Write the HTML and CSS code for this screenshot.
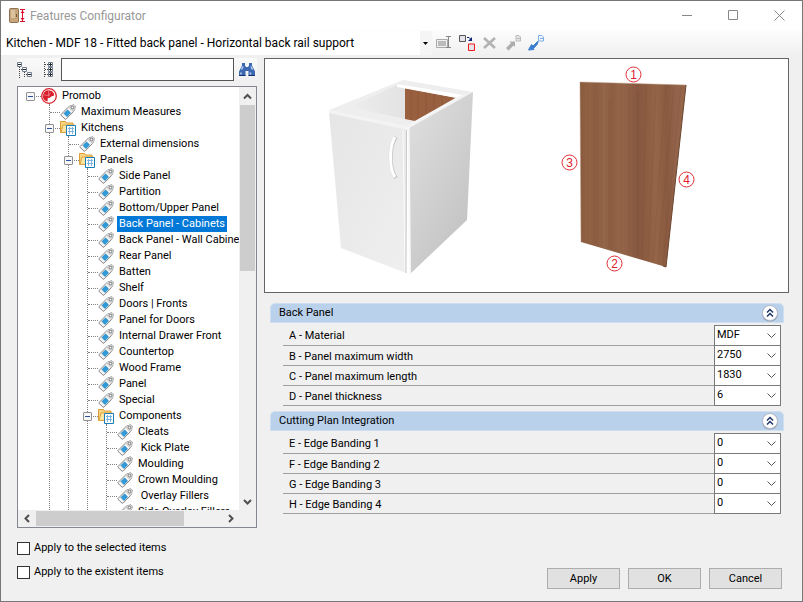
FILE: index.html
```
<!DOCTYPE html>
<html lang="en">
<head>
    <meta charset="UTF-8">
    <meta name="viewport" content="width=device-width, initial-scale=1.0">
    <title>Features Configurator</title>
    <link rel="stylesheet" href="styles.css">
</head>
<body>
    <!-- Shared icons -->
    <svg class="defs" width="0" height="0" aria-hidden="true">
        <symbol id="tag" viewBox="0 0 16 16">
            <path d="M1 10.500 9.500 2l4.500-1.200 1.200 1.200-.7 4.500L6 15.200H5.200L1 11.300z" fill="#f4f4f4" stroke="#858585"/>
            <path d="M9.500 2 14 .8l1.200 1.200-.7 4.500-1.500 1.500-5-4.500z" fill="#d2d2d2"/>
            <circle cx="12.500" cy="3.500" r="1.300" fill="#fff" stroke="#777"/>
            <path d="m4 9.500 3.500-3.500 3 2.800L7 12.500z" fill="#2d9bdc" stroke="#1577b8" stroke-width=".7"/>
        </symbol>
        <symbol id="folder" viewBox="0 0 16 16">
            <path d="M.5 12.500V1.500h5l1 1.500h6.500v9.500z" fill="#f6d583" stroke="#dd9d35"/>
            <path d="M1 12.500 3 5h11.500v7z" fill="#fde6a2" stroke="#dfa443"/>
            <path d="M6.500 5.500h9v10h-9z" fill="#fff" stroke="#1a7fb8"/>
            <path d="M8 8.500h6M8 11.500h6M9.500 7v7M12.500 7v7" stroke="#7db4e0"/>
        </symbol>
        <symbol id="promob" viewBox="0 0 16 16">
            <circle cx="8" cy="8" r="7.300" fill="#fff" stroke="#d9232e" stroke-width="1.300"/>
            <path d="M7.500 2.300a5.700 5.700 0 0 0-2.500 10.700l1.500.4.300-3.500 2-.2 1.500-1.200 2.800-1-.3-2.200-2-2.400z" fill="#d81e2c"/>
            <path d="M7.500 2.500v5M3 7l5 .5M9.500 4.500l-2 4" stroke="#f08a90" stroke-width=".7"/>
        </symbol>
        <symbol id="collapse" viewBox="0 0 18 18">
            <circle cx="9" cy="9.500" r="8" fill="#8b93a6"/>
            <circle cx="9" cy="9" r="7.500" fill="#fff" stroke="#b6bcc8"/>
            <path d="m6 8.500 3-3 3 3M6 12.500l3-3 3 3" fill="none" stroke="#1e3566" stroke-width="1.500"/>
        </symbol>
    </svg>

    <div class="window">
        <header class="titlebar">
            <svg class="app-icon" width="17" height="16" viewBox="0 0 17 16" aria-hidden="true">
                <rect x=".5" y=".5" width="9" height="14" rx="1" fill="#c6a57a" stroke="#8d7150"/>
                <path d="M2 2h4v8H2z" fill="#dcc29c"/>
                <path d="M7.500 6v3" stroke="#6d5436"/>
                <path d="M11 1.500h5M11 13.500h5M13.500 2v11" stroke="#d9102a"/>
                <path d="m11.500 5 2-2.500 2 2.500zM11.500 10l2 2.500 2-2.500z" fill="#d9102a"/>
            </svg>
            <h1>Features Configurator</h1>
            <div class="window-buttons">
                <button type="button" aria-label="Minimize"><svg width="11" height="11"><path d="M0 5.500h10"/></svg></button>
                <button type="button" aria-label="Maximize"><svg width="11" height="11"><path d="M.5.500h9v9h-9z"/></svg></button>
                <button type="button" aria-label="Close"><svg width="11" height="11"><path d="m.5.500 10 10m0-10-10 10"/></svg></button>
            </div>
        </header>

        <!-- Configuration picker and its actions -->
        <div class="toolbar">
            <select class="config" aria-label="Configuration">
                <option>Kitchen - MDF 18 - Fitted back panel - Horizontal back rail support</option>
            </select>
            <button type="button" aria-label="Rename">
                <svg width="16" height="16" viewBox="0 0 16 16"><path d="M.5 4.500h11v8H.5z" fill="#eee" stroke="#aaa"/><path d="M2 6h8v5H2z" fill="#bcbcbc"/><path d="M10 1.500h5M10 12.500h5M12.500 2v10" stroke="#888"/></svg>
            </button>
            <button type="button" aria-label="Duplicate">
                <svg width="16" height="16" viewBox="0 0 16 16"><path d="M.5.500h6v6h-6z" fill="#e4e4ea" stroke="#555"/><path d="M9.500 9h6v6.500h-6z" fill="#e4e4ea" stroke="#f01818"/><path d="M8 2.500h2l2 2" fill="none" stroke="#0a2472"/><path d="M13 2v4H9z" fill="#0a2472"/></svg>
            </button>
            <button type="button" aria-label="Delete">
                <svg width="16" height="16" viewBox="0 0 16 16"><path d="m2 3 11 10M13 3 2 13" stroke="#b2b2b2" stroke-width="2.500"/></svg>
            </button>
            <button type="button" aria-label="Export">
                <svg width="16" height="16" viewBox="0 0 16 16"><path d="m1 13 5-5-1.500-1.500H10V12L8.500 10.500l-5 5z" fill="#adadad"/><path d="M11 .5h3l1.500 1.500v4H11z" fill="#e4e4e4" stroke="#bbb"/><path d="M12 3.500h3" stroke="#bbb"/></svg>
            </button>
            <button type="button" aria-label="Import">
                <svg width="16" height="16" viewBox="0 0 16 16"><path d="m10 6-5 5L3.500 9.500.5 15 6 14.500l-.5-1L9.500 9z" fill="#3b7fd0" stroke="#3b7fd0"/><path d="M10.500.500h3L15.500 2v4h-5z" fill="#eef5ff" stroke="#7eaee6"/><path d="M12 3.500h3" stroke="#7eaee6"/></svg>
            </button>
        </div>

        <main class="content">
            <section class="left">
                <div class="search">
                    <button type="button" aria-label="Expand levels">
                        <svg width="16" height="16" viewBox="0 0 16 16"><path d="M2.500 5v11M4 7.500h3M7.500 10v6M9 12.500h3" stroke="#444" stroke-dasharray="1 1"/><path d="M.5.500h4v4h-4zM5.500 5.500h4v4h-4zM10.500 10.500h4v4h-4z" fill="#fff" stroke="#6f7f90"/><path d="M1 2.500h3M6 7.500h3M11 12.500h3" stroke="#222"/></svg>
                    </button>
                    <button type="button" aria-label="Collapse levels">
                        <svg width="16" height="16" viewBox="0 0 16 16"><path d="M4.500 0v16M5 2.500h3M5 7.500h3M5 12.500h3" stroke="#444" stroke-dasharray="1 1"/><path d="M8.500.500h4v4h-4zM8.500 5.500h4v4h-4zM8.500 10.500h4v4h-4z" fill="#fff" stroke="#6f7f90"/><path d="M9 2.500h3M10.500 1v3M9 7.500h3M10.500 6v3M9 12.500h3M10.500 11v3" stroke="#222"/></svg>
                    </button>
                    <input type="text" aria-label="Search features">
                    <button type="button" aria-label="Find">
                        <svg width="16" height="16" viewBox="0 0 16 16"><path d="M3 1h3v2.500L7 5h2l1-1.500V1h3v2.500l3 6V14H9.500V9h-3v5H0V9.500l3-6z" fill="#3d69b0"/><path d="M2.500 7.500 4 4.500M12 4.500l1.500 3M2 10.500v2M11.500 10.500v2" stroke="#bdd3f3" stroke-width="1.500"/><path d="M0 13.500h6.500M9.500 13.500H16" stroke="#17346d"/></svg>
                    </button>
                </div>

                <div class="tree-box">
                    <div class="tree-view">
                        <ul class="tree" role="tree" aria-label="Features">
                            <li><div class="row"><button type="button" class="toggle" aria-label="Collapse Promob"></button><svg><use href="#promob"/></svg><span>Promob</span></div>
                                <ul>
                                    <li><div class="row"><svg><use href="#tag"/></svg><span>Maximum Measures</span></div></li>
                                    <li><div class="row"><button type="button" class="toggle" aria-label="Collapse Kitchens"></button><svg><use href="#folder"/></svg><span>Kitchens</span></div>
                                        <ul>
                                            <li><div class="row"><svg><use href="#tag"/></svg><span>External dimensions</span></div></li>
                                            <li><div class="row"><button type="button" class="toggle" aria-label="Collapse Panels"></button><svg><use href="#folder"/></svg><span>Panels</span></div>
                                                <ul>
                                                    <li><div class="row"><svg><use href="#tag"/></svg><span>Side Panel</span></div></li>
                                                    <li><div class="row"><svg><use href="#tag"/></svg><span>Partition</span></div></li>
                                                    <li><div class="row"><svg><use href="#tag"/></svg><span>Bottom/Upper Panel</span></div></li>
                                                    <li><div class="row selected"><svg><use href="#tag"/></svg><span>Back Panel - Cabinets</span></div></li>
                                                    <li><div class="row"><svg><use href="#tag"/></svg><span>Back Panel - Wall Cabinets</span></div></li>
                                                    <li><div class="row"><svg><use href="#tag"/></svg><span>Rear Panel</span></div></li>
                                                    <li><div class="row"><svg><use href="#tag"/></svg><span>Batten</span></div></li>
                                                    <li><div class="row"><svg><use href="#tag"/></svg><span>Shelf</span></div></li>
                                                    <li><div class="row"><svg><use href="#tag"/></svg><span>Doors | Fronts</span></div></li>
                                                    <li><div class="row"><svg><use href="#tag"/></svg><span>Panel for Doors</span></div></li>
                                                    <li><div class="row"><svg><use href="#tag"/></svg><span>Internal Drawer Front</span></div></li>
                                                    <li><div class="row"><svg><use href="#tag"/></svg><span>Countertop</span></div></li>
                                                    <li><div class="row"><svg><use href="#tag"/></svg><span>Wood Frame</span></div></li>
                                                    <li><div class="row"><svg><use href="#tag"/></svg><span>Panel</span></div></li>
                                                    <li><div class="row"><svg><use href="#tag"/></svg><span>Special</span></div></li>
                                                    <li><div class="row"><button type="button" class="toggle" aria-label="Collapse Components"></button><svg><use href="#folder"/></svg><span>Components</span></div>
                                                        <ul>
                                                            <li><div class="row"><svg><use href="#tag"/></svg><span>Cleats</span></div></li>
                                                            <li><div class="row"><svg><use href="#tag"/></svg><span>&nbsp;Kick Plate</span></div></li>
                                                            <li><div class="row"><svg><use href="#tag"/></svg><span>Moulding</span></div></li>
                                                            <li><div class="row"><svg><use href="#tag"/></svg><span>Crown Moulding</span></div></li>
                                                            <li><div class="row"><svg><use href="#tag"/></svg><span>&nbsp;Overlay Fillers</span></div></li>
                                                            <li><div class="row"><svg><use href="#tag"/></svg><span>Side Overlay Fillers</span></div></li>
                                                        </ul>
                                                    </li>
                                                </ul>
                                            </li>
                                        </ul>
                                    </li>
                                </ul>
                            </li>
                        </ul>
                    </div>
                    <div class="scroll vertical">
                        <button type="button" aria-label="Scroll up"><svg width="9" height="9"><path d="m1 6.500 3.500-3.500L8 6.500"/></svg></button>
                        <div class="track"><div class="thumb"></div></div>
                        <button type="button" aria-label="Scroll down"><svg width="9" height="9"><path d="M1 3l3.500 3.500L8 3"/></svg></button>
                    </div>
                    <div class="scroll horizontal">
                        <button type="button" aria-label="Scroll left"><svg width="9" height="9"><path d="M6 1 2.500 4.500 6 8"/></svg></button>
                        <div class="track"><div class="thumb"></div></div>
                        <button type="button" aria-label="Scroll right"><svg width="9" height="9"><path d="m3 1 3.500 3.500L3 8"/></svg></button>
                    </div>
                </div>
            </section>

            <section class="right">
                <div class="preview">
                    <!-- Cabinet and back panel with numbered edges -->
                    <svg viewBox="265 59 523 233" role="img" aria-label="Cabinet and its back panel">
                        <defs>
                            <linearGradient id="door" x1="0" y1="0" x2="1" y2="1"><stop offset="0" stop-color="#e6e6e6"/><stop offset=".5" stop-color="#eaeaea"/><stop offset="1" stop-color="#efefef"/></linearGradient>
                            <linearGradient id="side" x1="0" y1="0" x2=".7" y2="1"><stop offset="0" stop-color="#e0e0e0"/><stop offset="1" stop-color="#c2c2c2"/></linearGradient>
                            <linearGradient id="inside" x1="0" y1="0" x2="1" y2="0"><stop offset="0" stop-color="#ededed"/><stop offset="1" stop-color="#d9d9d9"/></linearGradient>
                            <linearGradient id="wood" x1="0" y1="0" x2="1" y2="0">
                                <stop offset="0" stop-color="#885a3d"/><stop offset=".08" stop-color="#936244"/><stop offset=".16" stop-color="#8c5d40"/><stop offset=".22" stop-color="#94664a"/><stop offset=".3" stop-color="#8d5d42"/><stop offset=".38" stop-color="#946548"/><stop offset=".46" stop-color="#8f6045"/><stop offset=".54" stop-color="#875740"/><stop offset=".64" stop-color="#8d5e42"/><stop offset=".72" stop-color="#956549"/><stop offset=".82" stop-color="#895a40"/><stop offset=".9" stop-color="#92634a"/><stop offset="1" stop-color="#956648"/>
                            </linearGradient>
                        </defs>
                        <path d="m329 110 74-30 70 12-64 36z" fill="#eeeeee"/>
                        <path d="m350 107 47-22 60 13-42 23z" fill="url(#inside)"/>
                        <path d="m405 88 52 10-42 23-10-2z" fill="#98603f"/>
                        <path d="M411 90v30M418 91v28M426 92v22M434 94v17M442 96v10" stroke="#88522f" stroke-opacity=".5"/>
                        <path d="m397 84 66 11-6 3-60-11z" fill="#fff"/>
                        <path d="m457 97 16-5-64 36-1-3z" fill="#f4f4f4"/>
                        <path d="m409 128 64-36-6 128-57 54z" fill="url(#side)"/>
                        <path d="m329 112 78 17-1 144-65-25z" fill="url(#door)"/>
                        <path d="m329 110 78 16 2 2-1 2-79-17z" fill="#f3f3f3"/>
                        <path d="m403 130 2 143" stroke="#fafafa"/>
                        <path d="m406.500 130-.5 143" stroke="#c8c8c8"/>
                        <path d="m408.500 127 1.500 147" stroke="#f8f8f8" stroke-width="2"/>
                        <path d="M396 137c-7 9-7 32 0 41" fill="none" stroke="#c7c7c7" stroke-width="4"/>
                        <path d="M395 137c-6 9-6 32 0 40" fill="none" stroke="#fff" stroke-width="3"/>
                        <path d="m580 82 106 3-20 182-85-25z" fill="url(#wood)"/>
                        <path d="M588 83v160M594 90v155M602 83v164M609 100v148M621 84v168M629 88v166M638 92v164M646 84l-4 174M656 85l-8 174M666 85l-13 176M674 86l-16 177M681 87l-18 176" stroke="#6e4129" stroke-opacity=".15" fill="none"/>
                        <path d="m580 82 1 160M580 82l106 3" stroke="#b89a82" stroke-opacity=".5"/>
                        <path d="m686 85-20 182-3-1" fill="none" stroke="#6c452e"/>
                        <g class="marks">
                            <circle cx="633.500" cy="74.500" r="7.500"/><text x="633.500" y="79">1</text>
                            <circle cx="614.500" cy="263.500" r="7.500"/><text x="614.500" y="268">2</text>
                            <circle cx="569.500" cy="162.500" r="7.500"/><text x="569.500" y="167">3</text>
                            <circle cx="686.500" cy="179.500" r="7.500"/><text x="686.500" y="184">4</text>
                        </g>
                    </svg>
                </div>

                <section class="group">
                    <div class="group-head">
                        <h2>Back Panel</h2>
                        <button type="button" aria-label="Collapse Back Panel"><svg width="18" height="18"><use href="#collapse"/></svg></button>
                    </div>
                    <table>
                        <tr><th scope="row"><label for="a">A - Material</label></th><td><select id="a"><option>MDF</option></select></td></tr>
                        <tr><th scope="row"><label for="b">B - Panel maximum width</label></th><td><select id="b"><option>2750</option></select></td></tr>
                        <tr><th scope="row"><label for="c">C - Panel maximum length</label></th><td><select id="c"><option>1830</option></select></td></tr>
                        <tr><th scope="row"><label for="d">D - Panel thickness</label></th><td><select id="d"><option>6</option></select></td></tr>
                    </table>
                </section>

                <section class="group">
                    <div class="group-head">
                        <h2>Cutting Plan Integration</h2>
                        <button type="button" aria-label="Collapse Cutting Plan Integration"><svg width="18" height="18"><use href="#collapse"/></svg></button>
                    </div>
                    <table>
                        <tr><th scope="row"><label for="e">E - Edge Banding 1</label></th><td><select id="e"><option>0</option></select></td></tr>
                        <tr><th scope="row"><label for="f">F - Edge Banding 2</label></th><td><select id="f"><option>0</option></select></td></tr>
                        <tr><th scope="row"><label for="g">G - Edge Banding 3</label></th><td><select id="g"><option>0</option></select></td></tr>
                        <tr><th scope="row"><label for="h">H - Edge Banding 4</label></th><td><select id="h"><option>0</option></select></td></tr>
                    </table>
                </section>
            </section>
        </main>

        <footer class="footer">
            <div class="checks">
                <label><input type="checkbox"> Apply to the selected items</label>
                <label><input type="checkbox"> Apply to the existent items</label>
            </div>
            <div class="actions">
                <button type="button">Apply</button>
                <button type="button">OK</button>
                <button type="button">Cancel</button>
            </div>
        </footer>
    </div>
</body>
</html>
```
FILE: styles.css
```
* {
    box-sizing: border-box;
}

body {
    margin: 0;
    font-family: Roboto, "Liberation Sans", sans-serif;
    font-size: 11px;
    line-height: 16px;
    color: #000;
}

h1, h2 {
    margin: 0;
    font-size: inherit;
    font-weight: normal;
}

button, input, select {
    font: inherit;
    color: inherit;
}

button {
    padding: 0;
    border: 0;
    background: none;
}

svg {
    display: block;
    flex: none;
}

.defs {
    position: absolute;
}

.window {
    display: flex;
    flex-direction: column;
    height: 100vh;
    border: 1px solid #777;
    background: #f0f0f0;
}

/* Title bar */
.titlebar {
    display: flex;
    align-items: center;
    height: 29px;
    padding-left: 8px;
    gap: 4px;
    background: #fff;
    color: #999;
    font-size: 12px;
}

.window-buttons {
    display: flex;
    margin-left: auto;
}

.window-buttons button {
    display: grid;
    place-items: center;
    width: 46px;
    height: 28px;
}

.window-buttons path {
    fill: none;
    stroke: #888;
}

/* Toolbar */
.toolbar {
    display: flex;
    align-items: center;
    height: 25px;
    gap: 7px;
    background: linear-gradient(#fdfdfd, #f0f0f0);
}

.config {
    width: 431px;
    height: 24px;
    margin-right: -3px;
    padding: 0 12px 0 5px;
    border: 0;
    appearance: none;
    background: #fff url("data:image/svg+xml,%3Csvg xmlns='http://www.w3.org/2000/svg' width='12' height='24'%3E%3Cpath d='M0 0h12v24H0z' fill='%23f5f5f5'/%3E%3Cpath d='M3 11h5l-2.500 3z'/%3E%3C/svg%3E") no-repeat right center;
    font-size: 12px;
}

.content {
    display: flex;
    flex: 1;
    min-height: 0;
    gap: 7px;
    padding: 3px 13px 0 16px;
}

/* Left side: search and tree */
.left {
    display: flex;
    flex-direction: column;
    flex: none;
    width: 240px;
    gap: 5px;
}

.search {
    display: flex;
    align-items: center;
    height: 23px;
    gap: 5px;
    background: linear-gradient(#fafafa, #f0f0f0);
}

.search button:first-child {
    margin-right: 2px;
}

.search input {
    flex: 1;
    min-width: 0;
    height: 23px;
    margin: 0;
    padding: 0 4px;
    border: 1px solid #555;
    background: #fff;
}

.search button:last-child {
    margin-right: 2px;
}

.tree-box {
    display: grid;
    grid-template-columns: 1fr 17px;
    grid-template-rows: 1fr 17px;
    flex: 1;
    min-height: 0;
    border: 1px solid #828790;
    background: #f0f0f0;
}

.tree-view {
    min-width: 0;
    min-height: 0;
    overflow: hidden;
    background: #fff;
}

.tree, .tree ul {
    margin: 0;
    padding: 0;
    list-style: none;
}

.tree {
    padding: 1px 0 0 13px;
}

.tree ul {
    margin-left: 18px;
    border-left: 1px dotted #808080;
}

.row {
    display: flex;
    align-items: center;
    height: 16px;
    white-space: nowrap;
}

.row::before {
    content: "";
    flex: none;
    width: 10px;
    border-top: 1px dotted #808080;
}

.row svg {
    width: 16px;
    height: 16px;
    margin-right: 3px;
}

.row span {
    padding: 0 2px;
}

.row.selected span {
    background: #0078d7;
    color: #fff;
}

.toggle {
    order: -1;
    width: 9px;
    height: 9px;
    margin: 0 -4px 0 -5px;
    border: 1px solid #919191;
    border-radius: 1px;
    background: linear-gradient(#2c4f9e, #2c4f9e) center / 5px 1px no-repeat #f7f7f7;
    z-index: 1;
}

/* Scrollbars */
.scroll {
    display: flex;
    background: #f0f0f0;
}

.scroll.vertical {
    flex-direction: column;
}

.scroll button {
    display: grid;
    place-items: center;
    width: 18px;
    height: 17px;
}

.scroll.vertical button {
    width: 17px;
    height: 18px;
}

.scroll path {
    fill: none;
    stroke: #505050;
    stroke-width: 2;
}

.track {
    flex: 1;
}

.thumb {
    background: #cdcdcd;
}

.vertical .thumb {
    width: 15px;
    height: 43%;
    margin-left: 1px;
}

.horizontal .thumb {
    width: 80%;
    height: 15px;
    margin-top: 1px;
}

/* Right side: preview and properties */
.right {
    flex: 1;
    min-width: 0;
}

.preview {
    margin-bottom: 10px;
    border: 1px solid #646464;
    background: #fff;
}

.preview svg {
    width: 100%;
}

.marks circle {
    fill: #fff;
    stroke: #e0303a;
}

.marks text {
    fill: #e0202c;
    font-family: "Liberation Sans", Arial, sans-serif;
    font-size: 12px;
    text-anchor: middle;
}

.group {
    margin: 0 5px 5px 6px;
}

.group-head {
    display: flex;
    align-items: center;
    justify-content: space-between;
    height: 20px;
    padding: 0 4px 0 8px;
    border: 1px solid #cfdff2;
    border-radius: 5px 5px 0 0;
    background: #b9d1ea;
}

.group table {
    width: calc(100% - 16px);
    margin: 2px 3px 0 13px;
    border-spacing: 0;
}

.group th, .group td {
    height: 20px;
    padding: 0;
    border-bottom: 1px solid #a0a0a0;
}

.group th {
    padding: 2px 0 0 6px;
    font-weight: normal;
    text-align: left;
}

.group td {
    width: 67px;
    border: 1px solid #7a7a7a;
    border-top: 0;
}

.group tr:first-child th, .group tr:first-child td {
    height: 21px;
}

.group tr:first-child td {
    border-top: 1px solid #7a7a7a;
}

.group select {
    display: block;
    width: 100%;
    height: 19px;
    padding: 0 16px 2px 2px;
    border: 0;
    border-radius: 0;
    appearance: none;
    background: #fff url("data:image/svg+xml,%3Csvg xmlns='http://www.w3.org/2000/svg' width='9' height='6'%3E%3Cpath d='M.5.500l4 4 4-4' fill='none' stroke='%23555'/%3E%3C/svg%3E") no-repeat right 4px center;
}

/* Footer */
.footer {
    display: flex;
    justify-content: space-between;
    align-items: flex-end;
    padding: 12px 20px 12px 16px;
}

.checks {
    display: grid;
    gap: 8px;
    padding-bottom: 9px;
}

.checks label {
    display: flex;
    align-items: center;
    gap: 4px;
}

.checks input {
    width: 13px;
    height: 13px;
    margin: 0;
    appearance: none;
    border: 1px solid #333;
    background: #fff;
}

.actions {
    display: flex;
    gap: 8px;
}

.actions button {
    width: 73px;
    height: 21px;
    border: 1px solid #adadad;
    background: #e1e1e1;
}
```
